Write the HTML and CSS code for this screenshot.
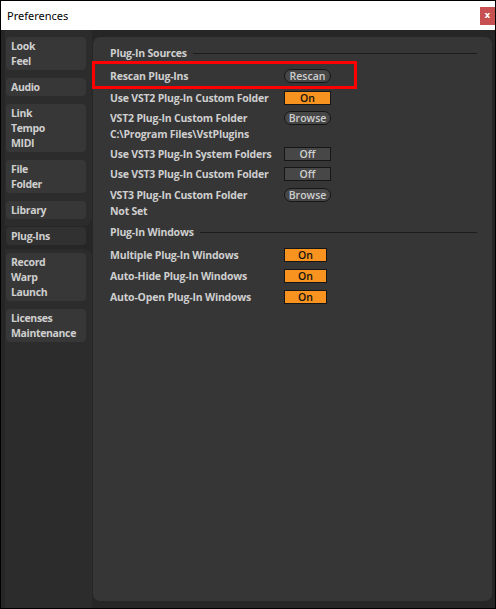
FILE: index.html
```html
<!DOCTYPE html>
<html>
<head>
<meta charset="utf-8">
<link rel="stylesheet" href="styles.css">
</head>
<body>
<div class="window">
  <div class="titlebar">
    <span class="title">Preferences</span>
    <span class="close">x</span>
  </div>
  <div class="content">
    <div class="sidebar">
      <div class="group group-top">
        <div class="tab">Look<br>Feel</div>
        <div class="tab">Audio</div>
        <div class="tab">Link<br>Tempo<br>MIDI</div>
        <div class="tab">File<br>Folder</div>
        <div class="tab">Library</div>
      </div>
      <div class="selected-wrap">
        <div class="tab selected">Plug-Ins</div>
      </div>
      <div class="group group-bottom">
        <div class="tab">Record<br>Warp<br>Launch</div>
        <div class="tab">Licenses<br>Maintenance</div>
      </div>
    </div>
    <div class="panel">
      <div class="highlight"></div>
      <div class="section-head first"><span>Plug-In Sources</span><i class="rule"></i></div>
      <div class="row gap8"><span class="label">Rescan Plug-Ins</span><span class="pill">Rescan</span></div>
      <div class="row gap6"><span class="label">Use VST2 Plug-In Custom Folder</span><span class="toggle on">On</span></div>
      <div class="row"><span class="label">VST2 Plug-In Custom Folder<br>C:\Program Files\VstPlugins</span><span class="pill">Browse</span></div>
      <div class="row"><span class="label">Use VST3 Plug-In System Folders</span><span class="toggle">Off</span></div>
      <div class="row"><span class="label">Use VST3 Plug-In Custom Folder</span><span class="toggle">Off</span></div>
      <div class="row gap5"><span class="label">VST3 Plug-In Custom Folder<br>Not Set</span><span class="pill">Browse</span></div>
      <div class="section-head"><span>Plug-In Windows</span><i class="rule"></i></div>
      <div class="row gap7"><span class="label">Multiple Plug-In Windows</span><span class="toggle on narrow">On</span></div>
      <div class="row gap5"><span class="label">Auto-Hide Plug-In Windows</span><span class="toggle on narrow">On</span></div>
      <div class="row gap5"><span class="label">Auto-Open Plug-In Windows</span><span class="toggle on narrow">On</span></div>
    </div>
  </div>
</div>
</body>
</html>
```

FILE: styles.css
```css
* { box-sizing: border-box; }
html, body { margin: 0; padding: 0; background: #ffffff; }
.window {
  width: 496px;
  height: 609px;
  border: 1px solid #000;
  display: flex;
  flex-direction: column;
  background: #262626;
  font-family: "Open Sans", "Noto Sans", sans-serif;
}
.titlebar {
  height: 29px;
  background: #ffffff;
  display: flex;
  align-items: flex-start;
  justify-content: space-between;
  flex: none;
}
.title {
  font-family: "Noto Sans", "Open Sans", sans-serif;
  font-size: 11px;
  color: #000;
  margin: 6px 0 0 6px;
  line-height: 17px;
}
.close {
  width: 15px;
  height: 18px;
  margin-top: 6px;
  background: #c75050;
  color: #fff;
  font-family: "DejaVu Sans", sans-serif;
  font-weight: bold;
  font-size: 9px;
  line-height: 17px;
  text-align: center;
}
.content {
  flex: 1;
  display: flex;
  padding: 7px 3px 7px 4px;
  min-height: 0;
}
.sidebar {
  width: 87px;
  display: flex;
  flex-direction: column;
  margin-top: -7px;
  margin-bottom: -7px;
  flex: none;
}
.group {
  background: #2c2c2c;
  display: flex;
  flex-direction: column;
  gap: 8px;
  padding-left: 1px;
}
.group-top {
  padding-top: 7px;
  padding-bottom: 7px;
  border-radius: 0 0 8px 0;
}
.group-bottom {
  flex: 1;
  padding-top: 4px;
  border-radius: 0 8px 0 0;
}
.selected-wrap {
  padding: 1px 0 4px 1px;
}
.tab {
  width: 80px;
  background: #373737;
  border-radius: 4px;
  color: #cfcfcf;
  font-size: 10.5px;
  font-weight: 700;
  letter-spacing: -0.35px;
  line-height: 15px;
  padding: 2px 5px 1px;
}
.tab.selected {
  background: #313131;
}
.panel {
  position: relative;
  flex: 1;
  margin-left: 1px;
  background: #363636;
  border-radius: 7px;
  padding: 8px 15px 0 17px;
  color: #cfcfcf;
  font-size: 10.5px;
  font-weight: 700;
  letter-spacing: -0.2px;
}
.highlight {
  position: absolute;
  left: -1px;
  top: 24px;
  width: 265px;
  height: 28px;
  border: 3px solid #ff0000;
}
.section-head {
  display: flex;
  align-items: center;
  line-height: 16px;
  margin-top: 5px;
}
.section-head.first { margin-top: 0; }
.rule {
  flex: 1;
  height: 1px;
  background: #1c1c1c;
  margin-left: 6px;
}
.row {
  display: grid;
  grid-template-columns: 174px auto;
  align-items: start;
  line-height: 16px;
  margin-top: 4px;
}
.row.gap5 { margin-top: 5px; }
.row.gap6 { margin-top: 6px; }
.row.gap7 { margin-top: 7px; }
.row.gap8 { margin-top: 7px; }
.pill, .toggle {
  display: block;
  width: 47px;
  height: 14px;
  margin-top: 1px;
  text-align: center;
  line-height: 12px;
  font-size: 10.5px;
  font-weight: 600;
  letter-spacing: 0;
  border: 1px solid #161616;
}
.pill {
  background: #474747;
  border-radius: 7px;
  color: #cfcfcf;
}
.toggle {
  background: #474747;
  color: #cfcfcf;
}
.toggle.on {
  background: #f7931e;
  color: #111;
}
.toggle.narrow { width: 43px; }
```
